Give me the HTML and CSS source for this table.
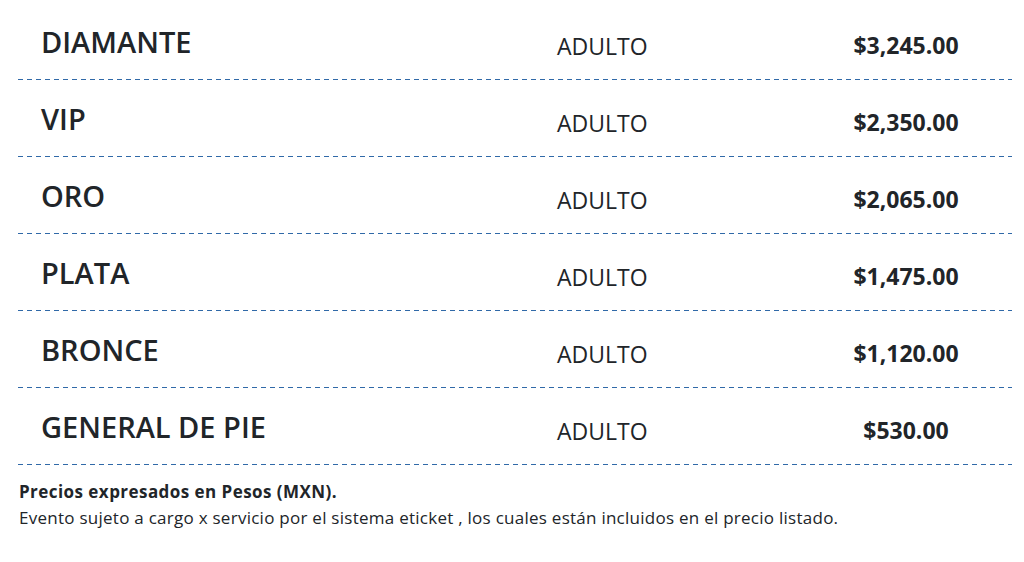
FILE: index.html
```html
<!DOCTYPE html>
<html lang="es">
<head>
<meta charset="utf-8">
<title>Precios</title>
<link rel="stylesheet" href="styles.css">
</head>
<body>
<div class="prices">
  <div class="row"><div class="name">DIAMANTE</div><div class="type">ADULTO</div><div class="price">$3,245.00</div></div>
  <div class="row"><div class="name">VIP</div><div class="type">ADULTO</div><div class="price">$2,350.00</div></div>
  <div class="row"><div class="name">ORO</div><div class="type">ADULTO</div><div class="price">$2,065.00</div></div>
  <div class="row"><div class="name">PLATA</div><div class="type">ADULTO</div><div class="price">$1,475.00</div></div>
  <div class="row"><div class="name">BRONCE</div><div class="type">ADULTO</div><div class="price">$1,120.00</div></div>
  <div class="row"><div class="name">GENERAL DE PIE</div><div class="type">ADULTO</div><div class="price">$530.00</div></div>
  <div class="notes">
    <p class="strong">Precios expresados en Pesos (MXN).</p>
    <p>Evento sujeto a cargo x servicio por el sistema eticket , los cuales están incluidos en el precio listado.</p>
  </div>
</div>
</body>
</html>
```
FILE: styles.css
```css
html, body {
  margin: 0;
  padding: 0;
  background: #ffffff;
}
body {
  font-family: "Open Sans", "Liberation Sans", sans-serif;
  color: #212529;
}
.prices {
  padding: 3px 12px 0 18px;
}
.row {
  display: grid;
  grid-template-columns: 539px 263px 172px;
  height: 77px;
  box-sizing: border-box;
  padding-right: 20px;
  background: linear-gradient(to right, #3069a8 5px, transparent 5px) left bottom / 9px 1px repeat-x;
}
.name {
  padding-left: 23px;
  padding-top: 24px;
  font-size: 29px;
  font-weight: 600;
  line-height: 1;
}
.type {
  padding-top: 32px;
  font-size: 23px;
  line-height: 1;
}
.price {
  padding-top: 31px;
  text-align: center;
  font-size: 23px;
  font-weight: 700;
  line-height: 1;
}
.notes {
  padding: 14px 0 0 1px;
  font-size: 17px;
  line-height: 26px;
  letter-spacing: 0.26px;
}
.notes p {
  margin: 0;
}
.notes .strong {
  font-weight: 700;
  letter-spacing: 0.45px;
}
```
